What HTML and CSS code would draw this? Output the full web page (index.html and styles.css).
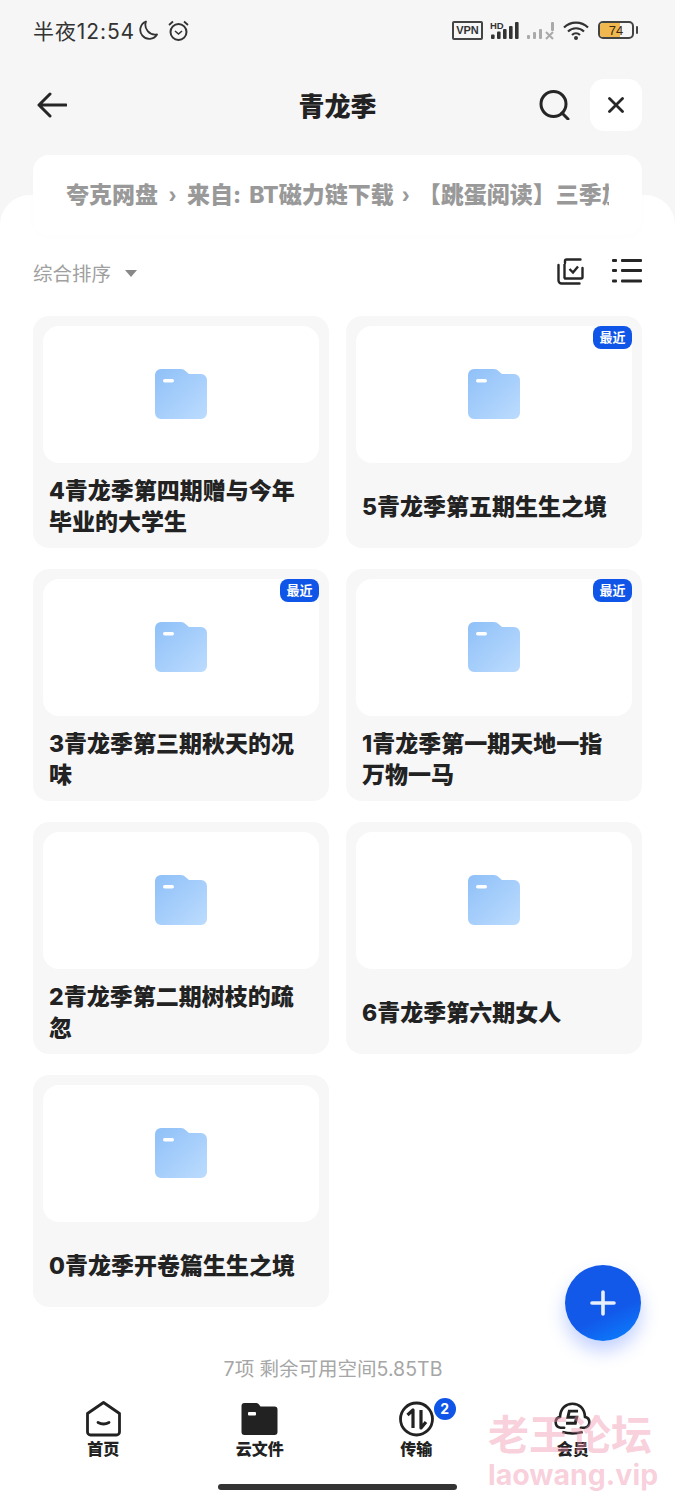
FILE: index.html
```html
<!DOCTYPE html>
<html lang="zh">
<head>
<meta charset="utf-8">
<title>青龙季</title>
<link rel="stylesheet" href="styles.css">
</head>
<body>
<div class="page">
  <header class="head">
    <div class="status">
      <div class="status-left">
        <span class="clock">半夜12:54</span>
        <svg class="i-moon" viewBox="0 0 20 20"><path d="M8 1.500A9 9 0 1 0 19 14.500 9.800 9.800 0 0 1 8 1.500Z" fill="none" stroke="#333" stroke-width="1.800" stroke-linejoin="round"/></svg>
        <svg class="i-alarm" viewBox="0 0 23 21"><circle cx="11.500" cy="12" r="8" fill="none" stroke="#333" stroke-width="2"/><path d="M8 11l3.500 3 3.500-3" fill="none" stroke="#333" stroke-width="1.600"/><path d="M2 5l4-3.500M21 5l-4-3.500" stroke="#333" stroke-width="1.800" fill="none"/></svg>
      </div>
      <div class="status-right">
        <span class="vpn">VPN</span>
        <svg class="i-sig" viewBox="0 0 29 19"><text x="0" y="7.500" class="hd">HD</text><g fill="#333"><rect x="1" y="13.500" width="3.600" height="4.500" rx="1"/><rect x="7" y="10.500" width="3.600" height="7.500" rx="1"/><rect x="13" y="8" width="3.600" height="10" rx="1"/><rect x="19" y="5" width="3.600" height="13" rx="1"/><rect x="25" y="1" width="3.600" height="17" rx="1"/></g></svg>
        <svg class="i-sig2" viewBox="0 0 28 19"><g fill="#aaa"><rect x="0" y="14" width="3" height="4" rx="1"/><rect x="6" y="11" width="3" height="7" rx="1"/><rect x="12" y="8" width="3" height="10" rx="1"/><rect x="24" y="1" width="3" height="9" rx="1"/></g><path d="M19 11l7 7M26 11l-7 7" stroke="#aaa" stroke-width="2"/></svg>
        <svg class="i-wifi" viewBox="0 0 26 19"><g fill="none" stroke="#333" stroke-width="2.200"><path d="M1 6.500a17 17 0 0 1 24 0"/><path d="M5 10.500a11.500 11.500 0 0 1 16 0"/><path d="M9 14a6 6 0 0 1 8 0"/></g><circle cx="13" cy="17" r="2" fill="#333"/></svg>
        <div class="battery"><div class="batt-body"><div class="batt-fill"></div><span class="batt-num">74</span></div><div class="batt-cap"></div></div>
      </div>
    </div>
    <div class="topbar">
      <svg class="i-back" viewBox="0 0 30 26"><path d="M13 2 2 13l11 11M2 13h27" fill="none" stroke="#262626" stroke-width="3" stroke-linecap="round" stroke-linejoin="round"/></svg>
      <h1 class="title">青龙季</h1>
      <div class="top-actions">
        <svg class="i-search" viewBox="0 0 31 30"><circle cx="14.500" cy="14" r="12.500" fill="none" stroke="#262626" stroke-width="3"/><path d="M23 23l6 6" stroke="#262626" stroke-width="3" stroke-linecap="round"/></svg>
        <div class="close"><svg class="i-x" viewBox="0 0 16 16"><path d="M1.500 1.500l13 13M14.500 1.500l-13 13" stroke="#262626" stroke-width="2.800" stroke-linecap="round"/></svg></div>
      </div>
    </div>
  </header>

  <main class="sheet">
    <div class="crumb-wrap">
      <div class="crumbs">
        <div class="crumb-clip">
          <span>夸克网盘</span><span class="sep">›</span><span class="crumb-mid">来自: BT磁力链下载</span><span class="sep sep-tight">›</span><span>【跳蛋阅读】三季加长版</span>
        </div>
      </div>
    </div>
    <div class="toolbar">
      <div class="sort"><span>综合排序</span><span class="caret"></span></div>
      <div class="tools">
        <svg class="i-select" viewBox="0 0 27 27"><path d="M8 5V3a1.500 1.500 0 0 1 1.500-1.500h14M25.500 10v9a1.500 1.500 0 0 1-1.500 1.500H8" fill="none" stroke="#262626" stroke-width="2.400" stroke-linecap="round"/><path d="M1.500 7v15.500a3 3 0 0 0 3 3h18" fill="none" stroke="#262626" stroke-width="2.400" stroke-linecap="round"/><path d="M7.500 6v14.500" stroke="#262626" stroke-width="2.400"/><path d="M12.500 11l3.500 3.500 5-6" fill="none" stroke="#262626" stroke-width="2.400"/></svg>
        <svg class="i-list" viewBox="0 0 30 24"><g fill="#262626"><rect x="0" y="0" width="5" height="3" rx="1"/><rect x="0" y="10" width="5" height="3" rx="1"/><rect x="0" y="20.500" width="5" height="3" rx="1"/><rect x="9" y="0" width="21" height="3" rx="1"/><rect x="9" y="10" width="21" height="3" rx="1"/><rect x="9" y="20.500" width="21" height="3" rx="1"/></g></svg>
      </div>
    </div>

    <svg class="defs" width="0" height="0"><defs>
      <linearGradient id="fg" x1="0" y1="0" x2="1" y2="1"><stop offset="0" stop-color="#8fc0f8"/><stop offset="1" stop-color="#bcdcfe"/></linearGradient>
      <symbol id="folder" viewBox="0 0 52 50"><path d="M6 0h20a6 6 0 0 1 4.500 2L34 5h12a6 6 0 0 1 6 6v33a6 6 0 0 1-6 6H6a6 6 0 0 1-6-6V6a6 6 0 0 1 6-6Z" fill="url(#fg)"/><rect x="8" y="10" width="11" height="3.500" rx="1.700" fill="#fff"/></symbol>
    </defs></svg>

    <div class="grid">
      <article class="card"><div class="thumb"><svg class="folder"><use href="#folder"/></svg></div><div class="name">4青龙季第四期赠与今年毕业的大学生</div></article>
      <article class="card"><div class="thumb"><svg class="folder"><use href="#folder"/></svg><span class="recent">最近</span></div><div class="name">5青龙季第五期生生之境</div></article>
      <article class="card"><div class="thumb"><svg class="folder"><use href="#folder"/></svg><span class="recent">最近</span></div><div class="name">3青龙季第三期秋天的况味</div></article>
      <article class="card"><div class="thumb"><svg class="folder"><use href="#folder"/></svg><span class="recent">最近</span></div><div class="name">1青龙季第一期天地一指万物一马</div></article>
      <article class="card"><div class="thumb"><svg class="folder"><use href="#folder"/></svg></div><div class="name">2青龙季第二期树枝的疏忽</div></article>
      <article class="card"><div class="thumb"><svg class="folder"><use href="#folder"/></svg></div><div class="name">6青龙季第六期女人</div></article>
      <article class="card"><div class="thumb"><svg class="folder"><use href="#folder"/></svg></div><div class="name">0青龙季开卷篇生生之境</div></article>
    </div>

    <p class="quota">7项 剩余可用空间5.85TB</p>

    <nav class="tabs">
      <div class="tab">
        <svg class="tab-ico" viewBox="0 0 36 36"><path d="M18 1.500 34 12.500V31a3 3 0 0 1-3 3H5a3 3 0 0 1-3-3V12.500Z" fill="none" stroke="#222" stroke-width="2.800" stroke-linejoin="round"/><path d="M12.500 21.500q5.500 3 11 0" fill="none" stroke="#222" stroke-width="2.800" stroke-linecap="round"/></svg>
        <span>首页</span>
      </div>
      <div class="tab">
        <svg class="tab-ico" viewBox="0 0 36 36"><path d="M3 2h12a3 3 0 0 1 2.500 1.500L19 5.500h14a3 3 0 0 1 3 3V31a3 3 0 0 1-3 3H3a3 3 0 0 1-3-3V5a3 3 0 0 1 3-3Z" fill="#222"/><rect x="6.500" y="11" width="8" height="3.500" rx="1" fill="#fff"/></svg>
        <span>云文件</span>
      </div>
      <div class="tab">
        <div class="tab-ico-wrap">
          <svg class="tab-ico" viewBox="0 0 36 36"><circle cx="18" cy="18" r="16" fill="none" stroke="#222" stroke-width="2.800"/><path d="M9 14l5.500-5v18M22.500 9v18l5-6" fill="none" stroke="#222" stroke-width="3.200" stroke-linejoin="round"/></svg>
          <span class="dot">2</span>
        </div>
        <span>传输</span>
      </div>
      <div class="tab">
        <svg class="tab-ico" viewBox="0 0 40 36"><path d="M11 27.500H7a6 6 0 0 1-.5-11.800C7 6 13 1.500 20 1.500s13 4.500 13.500 14.200A6 6 0 0 1 33 27.500h-4" fill="none" stroke="#222" stroke-width="2.800" stroke-linecap="round"/><path d="M9 32q11 3 22 0" fill="none" stroke="#222" stroke-width="2.800"/><path d="M26 9.500H16.500l-1.500 6.500h9.500L23 22.500H13" fill="none" stroke="#222" stroke-width="3.200"/></svg>
        <span>会员</span>
      </div>
    </nav>
    <div class="home-bar"></div>
  </main>

  <button class="fab"><svg class="i-plus" viewBox="0 0 26 26"><path d="M13 2v22M2 13h22" stroke="#fff" stroke-opacity=".9" stroke-width="3.600" stroke-linecap="round"/></svg></button>

  <div class="watermark"><div class="wm-cn">老王论坛</div><div class="wm-en">laowang.vip</div></div>
</div>
</body>
</html>
```

FILE: styles.css
```css
* { box-sizing: border-box; }
html, body { margin: 0; padding: 0; }
body {
  font-family: "Inter", "Noto Sans CJK SC", sans-serif;
  background: #fff;
  color: #222;
}
.page {
  position: relative;
  width: 675px;
  height: 1500px;
  overflow: hidden;
  background: #fff;
}
.head {
  background: #f6f6f7;
  height: 240px;
  padding: 0 33px;
}
.status {
  height: 60px;
  display: flex;
  align-items: center;
  justify-content: space-between;
}
.status-left { display: flex; align-items: center; }
.clock { font-size: 21px; color: #333; width: 100px; white-space: nowrap; letter-spacing: 0.9px; }
.i-moon { width: 20px; height: 20px; margin-left: 5px; }
.i-alarm { width: 23px; height: 21px; margin-left: 9px; }
.status-right { display: flex; align-items: center; margin-right: 4px; }
.vpn {
  width: 31px; height: 19px;
  border: 2px solid #444; border-radius: 2px;
  font-size: 11px; font-weight: 600; color: #333;
  font-family: "Liberation Sans", sans-serif;
  display: flex; align-items: center; justify-content: center;
}
.i-sig { width: 29px; height: 19px; margin-left: 7px; }
.hd { font: 600 9.500px "Liberation Sans", sans-serif; fill: #333; }
.i-sig2 { width: 28px; height: 19px; margin-left: 8px; }
.i-wifi { width: 26px; height: 19px; margin-left: 8px; }
.battery { display: flex; align-items: center; margin-left: 9px; }
.batt-body {
  position: relative;
  width: 36px; height: 18px;
  border: 2px solid #444; border-radius: 5px;
  overflow: hidden;
  background: #f6f6f7;
}
.batt-fill { width: 20px; height: 100%; background: #f2b850; }
.batt-num {
  position: absolute; inset: 0;
  display: flex; align-items: center; justify-content: center;
  font: 13px "Liberation Sans", sans-serif; color: #3a2a10;
}
.batt-cap { width: 2px; height: 8px; background: #444; margin-left: 2px; border-radius: 1px; }

.topbar {
  position: relative;
  display: flex;
  align-items: center;
  justify-content: space-between;
  margin-top: 19px;
  height: 52px;
}
.i-back { width: 30px; height: 26px; margin-left: 4px; }
.title {
  position: absolute; left: 0; right: 0; top: 0; margin: 0;
  text-align: center;
  font-size: 26px; line-height: 56px; font-weight: 900; color: #222;
  pointer-events: none;
}
.top-actions { display: flex; align-items: center; }
.i-search { width: 31px; height: 30px; margin-right: 20px; }
.close {
  width: 52px; height: 52px; border-radius: 14px; background: #fff;
  display: flex; align-items: center; justify-content: center;
}
.i-x { width: 16px; height: 16px; }

.sheet {
  position: relative;
  display: flow-root;
  margin-top: -45px;
  height: 1305px;
  background: #fff;
  border-radius: 30px 30px 0 0;
  padding: 0 33px;
}
.crumb-wrap { margin-top: -40px; height: 80px; position: relative; }
.crumbs {
  height: 80px;
  padding: 0 33px;
  background: #fff;
  border-radius: 16px;
  box-shadow: 0 2px 8px rgba(0,0,0,.012);
  display: flex;
  align-items: center;
}
.crumb-clip {
  width: 100%;
  overflow: hidden;
  white-space: nowrap;
  font-size: 23px;
  line-height: 32px;
  font-weight: 800;
  color: #999;
}
.crumb-mid { word-spacing: 3px; }
.sep { display: inline-block; width: 29px; text-align: center; font-size: 24px; font-weight: 700; font-family: "Liberation Sans", sans-serif; }
.sep-tight { width: 24px; }

.toolbar {
  display: flex; align-items: center; justify-content: space-between;
  height: 36px; margin-top: 21px;
}
.sort { display: flex; align-items: center; font-size: 19.500px; color: #a0a0a0; margin-top: -4px; }
.caret {
  width: 0; height: 0; margin-left: 14px; margin-top: 3px;
  border-left: 6px solid transparent; border-right: 6px solid transparent;
  border-top: 7px solid #888;
}
.tools { display: flex; align-items: center; margin-top: -6px; }
.i-select { width: 27px; height: 27px; margin-right: 28px; }
.i-list { width: 30px; height: 24px; }
.defs { position: absolute; }

.grid {
  display: grid;
  grid-template-columns: 296px 296px;
  column-gap: 17px;
  row-gap: 21px;
  grid-auto-rows: 232px;
  margin-top: 24px;
}
.card {
  background: #f7f7f8;
  border-radius: 16px;
  padding: 10px 10px 0;
  display: flex;
  flex-direction: column;
}
.thumb {
  position: relative;
  height: 137px;
  background: #fff;
  border-radius: 16px;
  display: flex; align-items: center; justify-content: center;
  flex: none;
}
.folder { width: 52px; height: 50px; margin-top: -2px; }
.recent {
  position: absolute; top: 0; right: 0;
  width: 39px; height: 23px;
  background: #0f55e8; color: #fff;
  border-radius: 8px;
  font-size: 13px; font-weight: 700; line-height: 23px; text-align: center;
}
.name {
  flex: 1;
  display: flex; align-items: center;
  padding: 3px 20px 0 6px;
  font-size: 23px; line-height: 31px; font-weight: 800; color: #222;
}
.quota {
  margin: 49px 9px 0 0;
  text-align: center;
  font-size: 19.500px; line-height: 26px; color: #a6a6a6;
}
.tabs {
  display: grid;
  grid-template-columns: repeat(4, 156.500px);
  margin: 19px 0 0 -8px;
}
.tab {
  display: flex; flex-direction: column; align-items: center;
  font-size: 16px; line-height: 22px; font-weight: 800; color: #222;
}
.tab-ico { width: 37px; height: 36px; display: block; margin-bottom: 1px; }
.tab-ico-wrap { position: relative; }
.dot {
  position: absolute; top: -3px; left: 36px;
  width: 22px; height: 22px; border-radius: 50%;
  background: #0f55e8; color: #fff;
  font-size: 14px; line-height: 22px; text-align: center; font-weight: 700;
}
.home-bar {
  position: absolute; left: 218px; bottom: 10px;
  width: 239px; height: 6px; border-radius: 3px; background: #333;
}
.fab {
  position: absolute; left: 565px; top: 1265px;
  width: 76px; height: 76px; padding: 0; border: 0; border-radius: 50%;
  background: linear-gradient(155deg, #1259ea 0%, #1259ea 62%, #0a84ff 100%);
  box-shadow: 0 10px 18px rgba(40,90,255,.28);
  display: flex; align-items: center; justify-content: center;
}
.i-plus { width: 26px; height: 26px; }
.watermark {
  position: absolute; left: 488px; top: 1411px;
  color: rgba(240,150,175,.45);
  font-weight: 700;
  pointer-events: none;
}
.wm-cn { font-size: 41px; line-height: 48px; white-space: nowrap; }
.wm-en { font-size: 28.500px; line-height: 32px; font-family: "Inter", sans-serif; white-space: nowrap; }
```
